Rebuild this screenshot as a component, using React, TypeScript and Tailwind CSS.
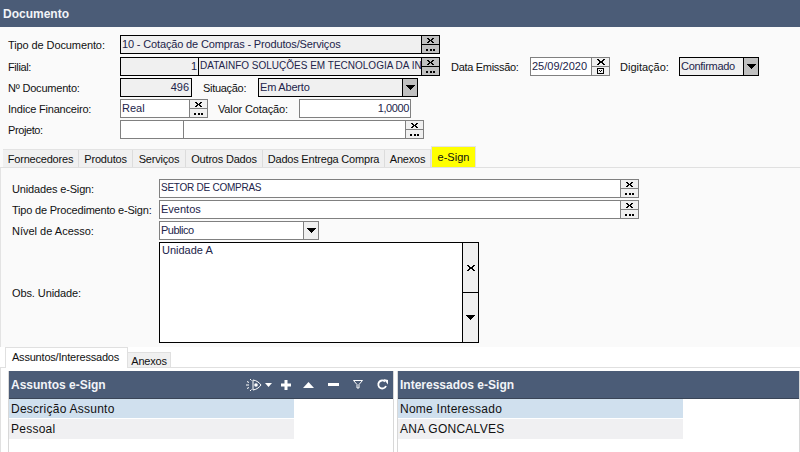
const font = "font-['Liberation_Sans',Arial,sans-serif]"

function XMark({ w = 7, h = 5 }: { w?: number; h?: number }) {
  return (
    <svg width={w} height={h} viewBox="0 0 7 5" shapeRendering="crispEdges">
      <path d="M0 0h2v1H0zM5 0h2v1H5zM1 1h2v1H1zM4 1h2v1H4zM2 2h3v1H2zM1 3h2v1H1zM4 3h2v1H4zM0 4h2v1H0zM5 4h2v1H5z" fill="#000" />
    </svg>
  )
}

function Dots() {
  return (
    <svg className="mt-[2px]" width="9" height="2" viewBox="0 0 9 2" shapeRendering="crispEdges">
      <path d="M0 0h2v2H0zM3.500 0h2v2h-2zM7 0h2v2H7z" fill="#000" />
    </svg>
  )
}

function Caret() {
  return (
    <svg width="9" height="5" viewBox="0 0 9 5" shapeRendering="crispEdges">
      <path d="M0 0h9v1H8v1H7v1H6v1H5v1H4V4H3V3H2V2H1V1H0z" fill="#000" />
    </svg>
  )
}

// the two stacked x / ... buttons at the end of a lookup
function LookupBtns({ dark, date }: { dark?: boolean; date?: boolean }) {
  return (
    <div className={`w-[18px] shrink-0 flex flex-col border-l ${dark ? 'border-black bg-[#c0c0c0]' : 'border-[#808080] bg-[#f0f0f0]'}`}>
      <div className={`flex-1 flex items-center justify-center border-b ${dark ? 'border-black' : 'border-[#808080]'}`}>
        {date ? <XMark w={8} h={6} /> : <XMark />}
      </div>
      <div className="flex-1 flex items-center justify-center">
        {date ? (
          <svg width="7" height="6" viewBox="0 0 7 6" shapeRendering="crispEdges">
            <path d="M.5.500h6v5h-6z" fill="none" stroke="#000" />
            <path d="M2 2h1v1H2zM4 2h1v1H4zM3 3h1v1H3z" fill="#000" />
          </svg>
        ) : (
          <Dots />
        )}
      </div>
    </div>
  )
}

function Label({ w, children, className = 'tracking-[-0.2px]' }: { w?: string; children: React.ReactNode; className?: string }) {
  return <span className={`shrink-0 h-[19px] whitespace-nowrap text-[11px] leading-[21px] text-[#111] ${w ?? ''} ${className}`}>{children}</span>
}

function Lookup({ w, text, dark, date, textClass = 'text-[11px]' }: { w: string; text?: string; dark?: boolean; date?: boolean; textClass?: string }) {
  return (
    <div className={`${w} h-[19px] shrink-0 flex border ${dark ? 'border-black bg-[#f0f0f0]' : 'border-[#808080] bg-white'}`}>
      <span className={`flex-1 min-w-0 overflow-hidden whitespace-nowrap pl-[1px] leading-[16px] text-[#22244a] ${textClass}`}>{text}</span>
      <LookupBtns dark={dark} date={date} />
    </div>
  )
}

function Select({ w, text, dark, textClass = 'tracking-[-0.2px]' }: { w: string; text: string; dark?: boolean; textClass?: string }) {
  return (
    <div className={`${w} h-[19px] shrink-0 flex border ${dark ? 'border-black bg-[#f0f0f0]' : 'border-[#808080] bg-white'}`}>
      <span className={`flex-1 pl-[1px] text-[11px] leading-[16px] whitespace-nowrap text-[#22244a] ${textClass}`}>{text}</span>
      <div className={`w-[15px] flex items-center justify-center border-l ${dark ? 'border-black bg-[#c0c0c0]' : 'border-[#808080] bg-[#f0f0f0]'}`}>
        <Caret />
      </div>
    </div>
  )
}

const tabs: [string, string][] = [
  ['Fornecedores', 'w-[76px]'],
  ['Produtos', 'w-[54px]'],
  ['Serviços', 'w-[53px]'],
  ['Outros Dados', 'w-[77px]'],
  ['Dados Entrega Compra', 'w-[122px]'],
  ['Anexos', 'w-[46px]'],
]

function GridPanel({ title, col, value, tools }: { title: string; col: string; value: string; tools?: boolean }) {
  return (
    <div className="flex flex-col border-x border-[#d8d8d8]">
      <div className="h-[28px] shrink-0 flex items-center justify-between bg-[#4b5c77] border-b border-[#3a4557] pl-[2px] pr-[5px]">
        <span className="text-[12px] font-bold text-[#f2f4f8]">{title}</span>
        {tools && <Tools />}
      </div>
      <div className="w-[285px] flex flex-col text-[12px] text-[#111] tracking-[0.25px]">
        <div className="h-[19px] bg-[#d0e0ee] leading-[21px] pl-[2px]">{col}</div>
        <div className="h-[20px] mt-[1px] bg-[#f0f0f2] leading-[21px] pl-[2px]">{value}</div>
      </div>
    </div>
  )
}

function Tools() {
  return (
    <div className="flex items-center">
      {/* eye with rays */}
      <svg width="16" height="14" viewBox="0 0 16 14" fill="none">
        <path d="M0 7h3M1 3.500l2 1M1 10.500l2-1M4 1l1.500 1.500M4 13l1.500-1.500" stroke="#fff" />
        <path d="M7 2c4 .5 6.500 3 8 5-1.500 2-4 4.500-8 5z" stroke="#fff" />
        <circle cx="10" cy="7" r="1.800" fill="#fff" />
      </svg>
      <svg className="ml-[3px]" width="7" height="4" viewBox="0 0 7 4"><path d="M0 0h7L3.500 4z" fill="#fff" /></svg>
      <svg className="ml-[9px]" width="10" height="10" viewBox="0 0 10 10"><path d="M3.500 0h3v3.500H10v3H6.500V10h-3V6.500H0v-3h3.500z" fill="#fff" /></svg>
      <svg className="ml-[12px]" width="11" height="6" viewBox="0 0 11 6"><path d="M5.500 0L11 6H0z" fill="#fff" /></svg>
      <svg className="ml-[14px]" width="11" height="3" viewBox="0 0 11 3"><path d="M0 0h11v3H0z" fill="#fff" /></svg>
      <svg className="ml-[14px]" width="10" height="9" viewBox="0 0 10 9"><path d="M.5.500h9L6 4.500V8H4V4.500z" fill="none" stroke="#fff" /></svg>
      <svg className="ml-[14px]" width="11" height="11" viewBox="0 0 11 11" fill="none"><path d="M8 2.500A4 4 0 1 0 9 7" stroke="#fff" strokeWidth="1.800" /><path d="M6.500 0L11 1v4.500z" fill="#fff" /></svg>
    </div>
  )
}

export default function App() {
  return (
    <div className={`${font} w-[800px] h-[452px] overflow-hidden bg-white flex flex-col`}>
      <div className="h-[27px] shrink-0 bg-[#4b5c77] pl-[3px] text-[12px] font-bold leading-[28px] text-[#f2f4f8]">Documento</div>

      {/* document header form */}
      <div className="h-[120px] shrink-0 bg-[#fafafa] pl-[8px] pt-[8px]">
        <div className="flex items-center">
          <Label w="w-[112px]" className="tracking-[-0.1px]">Tipo de Documento:</Label>
          <Lookup w="w-[320px]" text="10 - Cotação de Compras - Produtos/Serviços" dark textClass="text-[11px] tracking-[-0.15px]" />
        </div>
        <div className="flex items-center mt-[3px]">
          <Label w="w-[112px]" className="tracking-[-0.4px]">Filial:</Label>
          <div className="w-[320px] h-[19px] shrink-0 flex border border-black bg-[#f0f0f0] text-[11px] leading-[16px] text-[#22244a]">
            <span className="w-[78px] text-right pr-[1px] border-r border-black">1</span>
            <span className="flex-1 min-w-0 overflow-hidden whitespace-nowrap pl-[1px] text-[10px]">DATAINFO SOLUÇÕES EM TECNOLOGIA DA IN</span>
            <LookupBtns dark />
          </div>
          <Label w="w-[79px]" className="ml-[11px] tracking-[-0.3px]">Data Emissão:</Label>
          <Lookup w="w-[80px]" text="25/09/2020" date />
          <Label w="w-[59px]" className="ml-[10px] tracking-[0px]">Digitação:</Label>
          <Select w="w-[80px]" text="Confirmado" dark textClass="tracking-[-0.3px]" />
        </div>
        <div className="flex items-center mt-[2px]">
          <Label w="w-[112px]">Nº Documento:</Label>
          <div className="w-[72px] h-[19px] shrink-0 border border-black bg-[#f0f0f0] pr-[2px] text-right text-[11px] leading-[16px] text-[#22244a]">496</div>
          <Label w="w-[55px]" className="ml-[11px] tracking-[-0.3px]">Situação:</Label>
          <Select w="w-[160px]" text="Em Aberto" dark />
        </div>
        <div className="flex items-center mt-[2px]">
          <Label w="w-[112px]">Indice Financeiro:</Label>
          <Lookup w="w-[88px]" text="Real" />
          <Label w="w-[81px]" className="ml-[10px] tracking-[-0.15px]">Valor Cotação:</Label>
          <div className="w-[112px] h-[19px] shrink-0 border border-[#808080] bg-white pr-[1px] text-right text-[11px] leading-[16px] tracking-[-0.4px] text-[#22244a]">1,0000</div>
        </div>
        <div className="flex items-center mt-[2px]">
          <Label w="w-[112px]" className="tracking-[-0.4px]">Projeto:</Label>
          <div className="w-[304px] h-[19px] shrink-0 flex border border-[#808080] bg-white">
            <span className="w-[63px] border-r border-[#808080]" />
            <span className="flex-1" />
            <LookupBtns />
          </div>
        </div>
      </div>

      {/* main tabs */}
      <div className="h-[21px] shrink-0 flex items-end bg-[#fafafa] pl-[3px] border-b border-[#e0e0e0] text-[11px] text-[#111]">
        <div className="flex h-[18px] border-t border-[#e3e3e3] bg-[#f0f0f0]">
          {tabs.map(([t, w]) => (
            <div key={t} className={`${w} border-r border-[#dcdcdc] text-center leading-[18px] whitespace-nowrap tracking-[-0.2px]`}>{t}</div>
          ))}
        </div>
        <div className="w-[45px] h-[21px] bg-[#ffff00] border border-b-0 border-[#e3e3e3] text-center leading-[20px]">e-Sign</div>
      </div>

      {/* e-Sign panel */}
      <div className="h-[179px] shrink-0 bg-[#fafafa] border-l border-[#e3e3e3] pl-[11px] pt-[11px]">
        <div className="flex items-center">
          <Label w="w-[147px]" className="tracking-[-0.15px]">Unidades e-Sign:</Label>
          <Lookup w="w-[480px]" text="SETOR DE COMPRAS" textClass="text-[10px] tracking-[-0.25px]" />
        </div>
        <div className="flex items-center mt-[2px]">
          <Label w="w-[147px]" className="text-[10.5px] tracking-[-0.2px]">Tipo de Procedimento e-Sign:</Label>
          <Lookup w="w-[480px]" text="Eventos" />
        </div>
        <div className="flex items-center mt-[2px]">
          <Label w="w-[147px]" className="tracking-[0px]">Nível de Acesso:</Label>
          <Select w="w-[160px]" text="Publico" textClass="tracking-[-0.5px]" />
        </div>
        <div className="flex items-center mt-[2px]">
          <Label w="w-[147px]" className="tracking-[-0.1px]">Obs. Unidade:</Label>
          <div className="w-[320px] h-[101px] shrink-0 flex border border-black bg-white">
            <span className="flex-1 pl-[2px] text-[11px] leading-[15px] text-[#22244a]">Unidade A</span>
            <div className="w-[16px] flex flex-col border-l border-black bg-[#f0f0f0]">
              <div className="flex-1 flex items-center justify-center border-b border-black"><XMark w={8} h={6} /></div>
              <div className="flex-1 flex items-center justify-center"><Caret /></div>
            </div>
          </div>
        </div>
      </div>

      {/* inner tabs */}
      <div className="h-[21px] shrink-0 flex items-end pl-[5px] border-b border-[#e0e0e0] text-[11px] text-[#111]">
        <div className="w-[123px] h-[21px] -mb-[1px] bg-white border border-b-0 border-[#e0e0e0] text-center leading-[19px] whitespace-nowrap tracking-[-0.2px] pr-[2px]">Assuntos/Interessados</div>
        <div className="w-[43px] h-[15px] bg-[#f0f0f0] border border-b-0 border-l-0 border-[#e0e0e0] text-center leading-[16px] tracking-[-0.2px]">Anexos</div>
      </div>

      <div className="flex-1 grid grid-cols-[386px_403px] gap-x-[3px] pl-[7px] pt-[3px] border-l border-[#e0e0e0]">
        <GridPanel title="Assuntos e-Sign" col="Descrição Assunto" value="Pessoal" tools />
        <GridPanel title="Interessados e-Sign" col="Nome Interessado" value="ANA GONCALVES" />
      </div>
    </div>
  )
}
